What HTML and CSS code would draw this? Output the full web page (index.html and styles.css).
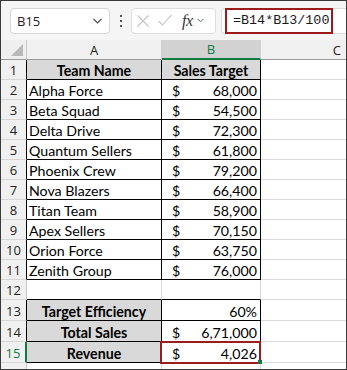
FILE: index.html
```html
<!DOCTYPE html>
<html>
<head>
<meta charset="utf-8">
<link rel="stylesheet" href="styles.css">
</head>
<body>
<div class="app">
  <div class="fbar">
    <div class="namebox">
      <span class="nb-text">B15</span>
      <svg class="nb-chev" width="9" height="6" viewBox="0 0 9 6"><path d="M0.5 0.8 L4.5 4.8 L8.5 0.8" fill="none" stroke="#444" stroke-width="1.2"/></svg>
    </div>
    <div class="dots"><i></i><i></i><i></i></div>
    <div class="fxbox">
      <svg class="ic-x" width="12" height="12" viewBox="0 0 12 12"><path d="M0.5 0.5 L11.5 11.5 M11.5 0.5 L0.5 11.5" stroke="#c4c4c4" stroke-width="1.1" fill="none"/></svg>
      <svg class="ic-ok" width="14" height="12" viewBox="0 0 14 12"><path d="M0.5 7 L4.5 11 L13.5 0.8" stroke="#c4c4c4" stroke-width="1.1" fill="none"/></svg>
      <span class="fx">fx</span>
      <svg class="fx-chev" width="7" height="5" viewBox="0 0 7 5"><path d="M0.5 0.8 L3.5 3.8 L6.5 0.8" fill="none" stroke="#666" stroke-width="1"/></svg>
    </div>
    <div class="formula">
      <span class="ftext">=B14*B13/100</span>
    </div>
  </div>

  <div class="sheet">
    <div class="corner"><svg width="12" height="12" viewBox="0 0 12 12"><path d="M12 0 L12 12 L0 12 Z" fill="#b9b9b9"/></svg></div>
    <div class="ch">A</div>
    <div class="ch sel">B</div>
    <div class="ch chc">C</div>

    <div class="rh tb">1</div><div class="c hd tl">Team Name</div><div class="c hd tr">Sales Target</div><div class="c e"></div>
    <div class="rh tb">2</div><div class="c tl">Alpha Force</div><div class="c tr m"><span>$</span><span>68,000</span></div><div class="c e"></div>
    <div class="rh tb">3</div><div class="c tl">Beta Squad</div><div class="c tr m"><span>$</span><span>54,500</span></div><div class="c e"></div>
    <div class="rh tb">4</div><div class="c tl">Delta Drive</div><div class="c tr m"><span>$</span><span>72,300</span></div><div class="c e"></div>
    <div class="rh tb">5</div><div class="c tl">Quantum Sellers</div><div class="c tr m"><span>$</span><span>61,800</span></div><div class="c e"></div>
    <div class="rh tb">6</div><div class="c tl">Phoenix Crew</div><div class="c tr m"><span>$</span><span>79,200</span></div><div class="c e"></div>
    <div class="rh tb">7</div><div class="c tl">Nova Blazers</div><div class="c tr m"><span>$</span><span>66,400</span></div><div class="c e"></div>
    <div class="rh tb">8</div><div class="c tl">Titan Team</div><div class="c tr m"><span>$</span><span>58,900</span></div><div class="c e"></div>
    <div class="rh tb">9</div><div class="c tl">Apex Sellers</div><div class="c tr m"><span>$</span><span>70,150</span></div><div class="c e"></div>
    <div class="rh tb">10</div><div class="c tl">Orion Force</div><div class="c tr m"><span>$</span><span>63,750</span></div><div class="c e"></div>
    <div class="rh tb">11</div><div class="c tl">Zenith Group</div><div class="c tr m"><span>$</span><span>76,000</span></div><div class="c e"></div>
    <div class="rh">12</div><div class="c blank bk"></div><div class="c blank bk"></div><div class="c e"></div>

    <div class="rh tb">13</div><div class="c hd tl">Target Efficiency</div><div class="c tr r">60%</div><div class="c e"></div>
    <div class="rh tb">14</div><div class="c hd tl">Total Sales</div><div class="c tr m"><span>$</span><span>6,71,000</span></div><div class="c e"></div>
    <div class="rh tb srow">15</div><div class="c hd tl">Revenue</div><div class="c tr m active"><span>$</span><span>4,026</span></div><div class="c e"></div>

    <div class="rh last"></div><div class="c last"></div><div class="c last"></div><div class="c last e"></div>
  </div>
</div>
</body>
</html>
```

FILE: styles.css
```css
html, body {
  margin: 0;
  padding: 0;
  background: #fff;
}

.app {
  width: 347px;
  height: 370px;
  box-sizing: border-box;
  border: 1px solid #3a3a3a;
  overflow: hidden;
  background: #f5f5f5;
  display: flex;
  flex-direction: column;
}

/* ---------- formula bar ---------- */
.fbar {
  height: 39px;
  flex: none;
  display: flex;
  align-items: center;
  padding-left: 9px;
  box-sizing: border-box;
  font-family: "Open Sans", "Noto Sans", sans-serif;
}

.namebox {
  width: 100px;
  height: 26px;
  box-sizing: border-box;
  border: 1px solid #d6d6d6;
  border-radius: 4px;
  background: #fff;
  display: flex;
  align-items: center;
  justify-content: space-between;
  padding: 0 7px 0 6px;
}

.nb-text {
  font-size: 13px;
  color: #222;
}

.dots {
  width: 21px;
  display: flex;
  flex-direction: column;
  align-items: center;
  gap: 3px;
}

.dots i {
  display: block;
  width: 2px;
  height: 2px;
  background: #555;
}

.fxbox {
  width: 85px;
  height: 26px;
  box-sizing: border-box;
  border: 1px solid #dcdcdc;
  border-radius: 4px;
  background: #fff;
  display: flex;
  align-items: center;
  padding-left: 5px;
}

.ic-x { margin-right: 9px; }
.ic-ok { margin-right: 10px; margin-top: -1px; }

.fx {
  font-family: "Liberation Serif", "DejaVu Serif", serif;
  font-style: italic;
  font-size: 16px;
  color: #333;
  margin-right: 4px;
  letter-spacing: -0.5px;
}

.formula {
  margin-left: 5px;
  flex: 1;
  height: 26px;
  box-sizing: border-box;
  border: 1px solid #dcdcdc;
  border-right: none;
  border-radius: 4px 0 0 4px;
  background: #fff;
  display: flex;
  align-items: center;
  padding-left: 3px;
}

.ftext {
  display: block;
  width: 108px;
  height: 26px;
  box-sizing: border-box;
  border: 2px solid #9c1c1c;
  font-family: "Liberation Mono", "DejaVu Sans Mono", monospace;
  font-size: 13.4px;
  line-height: 22px;
  color: #1a1a1a;
  padding-left: 6px;
}

/* ---------- sheet ---------- */
.sheet {
  flex: 1;
  display: grid;
  grid-template-columns: 26px 135px 99px 1fr;
  grid-template-rows: 20px repeat(12, 20px) repeat(3, 21px) 1fr;
  background: #fff;
  font-family: "Lato", "Liberation Sans", sans-serif;
  font-size: 14.2px;
  color: #000;
}

.corner {
  background: #efefef;
  border-right: 1px solid #c8c8c8;
  border-bottom: 1px solid #9a9a9a;
  display: flex;
  align-items: flex-end;
  justify-content: flex-end;
  padding: 0 3px 3px 0;
}

.ch {
  background: #f0f0f0;
  border-right: 1px solid #d0d0d0;
  border-bottom: 1px solid #9a9a9a;
  display: flex;
  align-items: center;
  justify-content: center;
  font-family: "Open Sans", "Noto Sans", sans-serif;
  font-size: 13px;
  color: #222;
}

.ch.sel {
  background: #d2d2d2;
  color: #107c41;
  border-bottom: 2px solid #107c41;
}

.ch.chc {
  justify-content: flex-end;
  padding-right: 5px;
  border-right: none;
}

.rh {
  background: #f0f0f0;
  border-right: 1px solid #c8c8c8;
  border-bottom: 1px solid #d6d6d6;
  display: flex;
  align-items: center;
  justify-content: center;
  padding-top: 1px;
  font-family: "Open Sans", "Noto Sans", sans-serif;
  font-size: 13px;
  color: #222;
}

.rh.tb {
  border-right-color: #000;
}

.rh.srow {
  color: #107c41;
  border-right: 2px solid #107c41;
}

.c {
  border-right: 1px solid #dadada;
  border-bottom: 1px solid #dadada;
  display: flex;
  align-items: center;
  padding-top: 2px;
  white-space: nowrap;
  overflow: hidden;
  box-sizing: border-box;
}

.c.tl {
  border-right-color: #000;
  border-bottom-color: #000;
  padding-left: 2px;
}

.c.tr {
  border-right-color: #000;
  border-bottom-color: #000;
}

.c.bk {
  border-bottom-color: #000;
}

.c.blank:nth-child(4n+2) {
  border-right-color: #dadada;
}

.c.hd {
  background: #d9d9d9;
  font-weight: bold;
  justify-content: center;
  padding-left: 0;
}

.c.m {
  justify-content: space-between;
  padding-left: 10px;
  padding-right: 3px;
}

.c.r {
  justify-content: flex-end;
  padding-right: 3px;
}

.c.e {
  border-right: none;
}

.c.active {
  position: relative;
  overflow: visible;
}

.c.active::after {
  content: "";
  position: absolute;
  left: -2px;
  top: -1px;
  right: -1px;
  bottom: -2px;
  border: 2px solid #9c1c1c;
  pointer-events: none;
}

.c.active::before {
  content: "";
  position: absolute;
  right: -2px;
  bottom: -2px;
  width: 4px;
  height: 4px;
  background: #107c41;
  z-index: 2;
}

.last {
  background: #fff;
}

.rh.last {
  background: #f0f0f0;
  border-bottom: none;
}

.c.last {
  border-bottom: none;
}
```
